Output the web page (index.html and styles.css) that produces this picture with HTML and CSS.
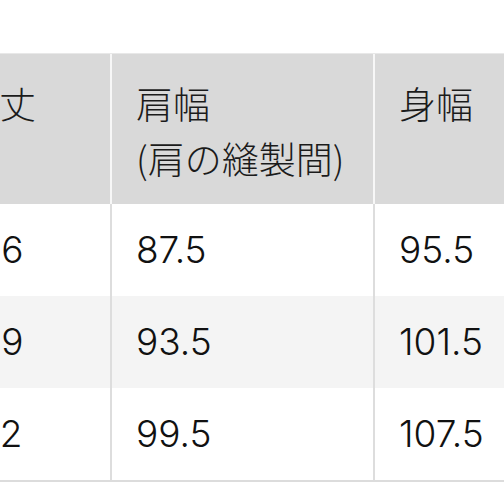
FILE: index.html
```html
<!DOCTYPE html>
<html lang="ja">
<head>
<meta charset="utf-8">
<title>サイズ表</title>
<link rel="stylesheet" href="styles.css">
</head>
<body>
<div class="wrap">
  <div class="table">
    <div class="row head">
      <div class="cell c1">着丈</div>
      <div class="cell c2">肩幅<br>(肩の縫製間)</div>
      <div class="cell c3">身幅</div>
    </div>
    <div class="row body">
      <div class="cell c1">66</div>
      <div class="cell c2">87.5</div>
      <div class="cell c3">95.5</div>
    </div>
    <div class="row body alt">
      <div class="cell c1">69</div>
      <div class="cell c2">93.5</div>
      <div class="cell c3">101.5</div>
    </div>
    <div class="row body">
      <div class="cell c1">72</div>
      <div class="cell c2">99.5</div>
      <div class="cell c3">107.5</div>
    </div>
  </div>
</div>
</body>
</html>
```

FILE: styles.css
```css
html, body {
  margin: 0;
  padding: 0;
  background: #ffffff;
}

.wrap {
  width: 504px;
  height: 504px;
  overflow: hidden;
  padding-top: 53px;
  box-sizing: border-box;
}

.table {
  margin-left: -62px;
  width: 640px;
  border-top: 1px solid #e8e8e8;
  border-bottom: 2px solid #dcdcdc;
  font-family: "Noto Sans CJK JP", sans-serif;
  font-size: 37px;
  font-weight: 300;
  color: #1b1b1b;
}

.row {
  display: grid;
  grid-template-columns: 174px 263px 203px;
}

.cell {
  box-sizing: border-box;
  padding: 0 24px;
  white-space: nowrap;
}

.c1, .c2 {
  border-right: 2px solid #dddddd;
}

.head {
  height: 150px;
  background: #d9d9d9;
}

.head .cell {
  padding-top: 22px;
  line-height: 55px;
}

.head .c1, .head .c2 {
  border-right-color: #f7f7f7;
}

.body {
  height: 92px;
  align-items: center;
  background: #ffffff;
}

.body .cell {
  height: 100%;
  display: flex;
  align-items: center;
  line-height: 54px;
  font-family: "Inter", "Noto Sans CJK JP", sans-serif;
  font-weight: 300;
  font-size: 37px;
  color: #111111;
}

.body .c1 {
  padding-left: 41px;
}

.body.alt {
  background: #f4f4f4;
}
```
